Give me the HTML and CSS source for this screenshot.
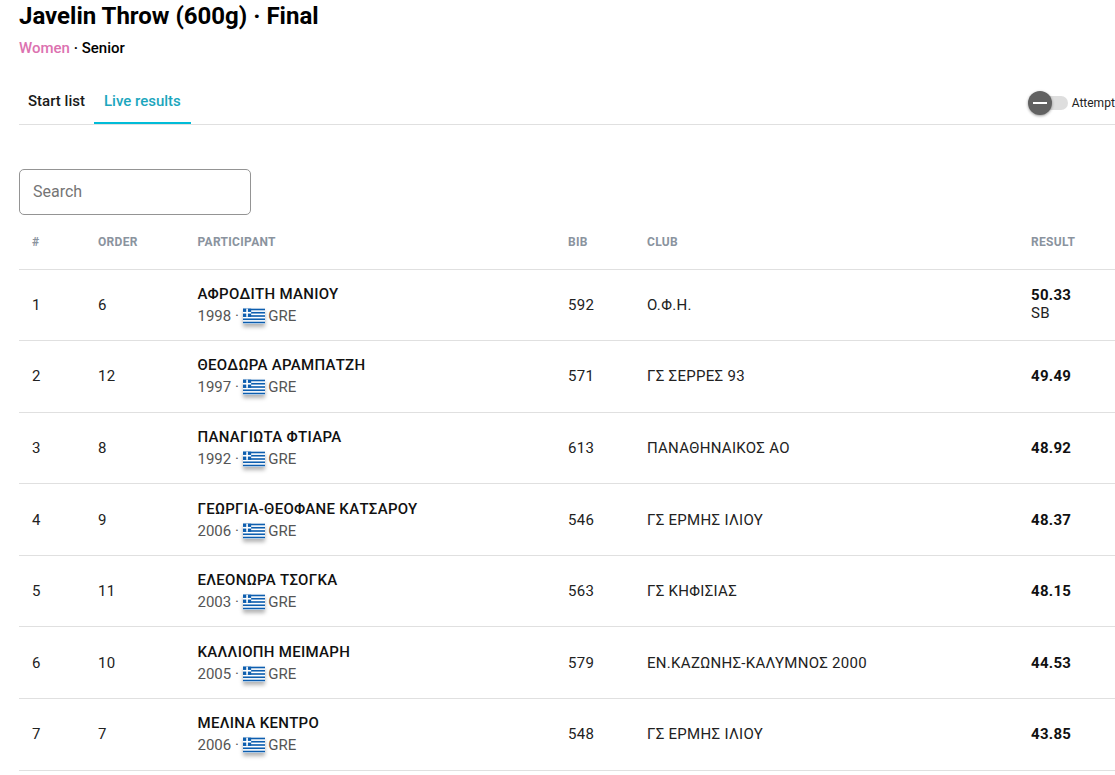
FILE: index.html
```html
<!DOCTYPE html>
<html lang="el">
<head>
<meta charset="utf-8">
<title>Javelin Throw (600g) · Final</title>
<link rel="stylesheet" href="styles.css">
</head>
<body>
<svg class="defs" width="0" height="0" aria-hidden="true">
  <symbol id="gre" viewBox="0 0 27 18">
    <rect width="27" height="18" fill="#0d5eaf"/>
    <g fill="#fff">
      <rect x="0" y="2" width="27" height="2"/>
      <rect x="0" y="6" width="27" height="2"/>
      <rect x="0" y="10" width="27" height="2"/>
      <rect x="0" y="14" width="27" height="2"/>
    </g>
    <rect width="10" height="10" fill="#0d5eaf"/>
    <rect x="4" width="2" height="10" fill="#fff"/>
    <rect y="4" width="10" height="2" fill="#fff"/>
  </symbol>
</svg>
<main class="page">
  <h1 class="title">Javelin Throw (600g) · Final</h1>
  <p class="subtitle"><span class="gender">Women</span> · <span class="category">Senior</span></p>
  <nav class="tabs">
    <a class="tab">Start list</a>
    <a class="tab tab-active">Live results</a>
    <div class="toggle">
      <span class="track"><span class="thumb"><span class="minus"></span></span></span>
      <span class="toggle-label">Attempts</span>
    </div>
  </nav>
  <div class="search"><span class="placeholder">Search</span></div>
  <table class="results">
    <colgroup>
      <col class="c-rank"><col class="c-order"><col class="c-name"><col class="c-bib"><col class="c-club"><col class="c-result">
    </colgroup>
    <thead>
      <tr><th>#</th><th>ORDER</th><th>PARTICIPANT</th><th>BIB</th><th>CLUB</th><th>RESULT</th></tr>
    </thead>
    <tbody>
      <tr><td>1</td><td>6</td><td><div class="name">ΑΦΡΟΔΙΤΗ ΜΑΝΙΟΥ</div><div class="meta">1998 · <svg class="flag"><use href="#gre"/></svg> GRE</div></td><td>592</td><td>Ο.Φ.Η.</td><td><div class="mark">50.33</div><div class="note">SB</div></td></tr>
      <tr><td>2</td><td>12</td><td><div class="name">ΘΕΟΔΩΡΑ ΑΡΑΜΠΑΤΖΗ</div><div class="meta">1997 · <svg class="flag"><use href="#gre"/></svg> GRE</div></td><td>571</td><td>ΓΣ ΣΕΡΡΕΣ 93</td><td><div class="mark">49.49</div></td></tr>
      <tr><td>3</td><td>8</td><td><div class="name">ΠΑΝΑΓΙΩΤΑ ΦΤΙΑΡΑ</div><div class="meta">1992 · <svg class="flag"><use href="#gre"/></svg> GRE</div></td><td>613</td><td>ΠΑΝΑΘΗΝΑΙΚΟΣ ΑΟ</td><td><div class="mark">48.92</div></td></tr>
      <tr><td>4</td><td>9</td><td><div class="name">ΓΕΩΡΓΙΑ-ΘΕΟΦΑΝΕ ΚΑΤΣΑΡΟΥ</div><div class="meta">2006 · <svg class="flag"><use href="#gre"/></svg> GRE</div></td><td>546</td><td>ΓΣ ΕΡΜΗΣ ΙΛΙΟΥ</td><td><div class="mark">48.37</div></td></tr>
      <tr><td>5</td><td>11</td><td><div class="name">ΕΛΕΟΝΩΡΑ ΤΣΟΓΚΑ</div><div class="meta">2003 · <svg class="flag"><use href="#gre"/></svg> GRE</div></td><td>563</td><td>ΓΣ ΚΗΦΙΣΙΑΣ</td><td><div class="mark">48.15</div></td></tr>
      <tr><td>6</td><td>10</td><td><div class="name">ΚΑΛΛΙΟΠΗ ΜΕΙΜΑΡΗ</div><div class="meta">2005 · <svg class="flag"><use href="#gre"/></svg> GRE</div></td><td>579</td><td>ΕΝ.ΚΑΖΩΝΗΣ-ΚΑΛΥΜΝΟΣ 2000</td><td><div class="mark">44.53</div></td></tr>
      <tr><td>7</td><td>7</td><td><div class="name">ΜΕΛΙΝΑ ΚΕΝΤΡΟ</div><div class="meta">2006 · <svg class="flag"><use href="#gre"/></svg> GRE</div></td><td>548</td><td>ΓΣ ΕΡΜΗΣ ΙΛΙΟΥ</td><td><div class="mark">43.85</div></td></tr>
    </tbody>
  </table>
</main>
</body>
</html>
```
FILE: styles.css
```css
* { box-sizing: border-box; }
html, body { margin: 0; height: 775px; overflow: hidden; background: #fff; }
body { font-family: Roboto, "Noto Sans", sans-serif; color: #000; font-size: 15px; }
.defs { position: absolute; }
.page { width: 1140px; padding-left: 19px; }
.title { margin: 0; font-size: 24px; line-height: 32px; font-weight: 700; }
.subtitle { margin: 7px 0 0; font-size: 15px; line-height: 18px; font-weight: 500; }
.gender { color: #dc72b0; }
.tabs { display: flex; align-items: stretch; height: 52px; margin-top: 16px; border-bottom: 1px solid #e0e0e0; width: 1121px; }
.tab { display: flex; align-items: center; padding: 6px 9px 0; font-size: 15px; font-weight: 500; color: #1a1a1a; border-bottom: 2px solid transparent; }
.tab-active { color: #1ba6bd; border-bottom-color: #00bcd8; width: 97px; justify-content: center; }
.toggle { display: flex; align-items: center; margin-left: auto; gap: 4px; margin-right: 19px; padding-top: 9px; }
.track { position: relative; display: block; width: 34px; height: 14px; border-radius: 7px; background: #dedede; }
.thumb { position: absolute; left: -6px; top: -5px; width: 24px; height: 24px; border-radius: 50%; background: #616161; box-shadow: 0 1px 3px rgba(0,0,0,.4); display: flex; align-items: center; justify-content: center; }
.minus { display: block; width: 14px; height: 2px; background: #fff; }
.toggle-label { font-size: 12px; color: #222; white-space: nowrap; }
.search { width: 232px; height: 46px; margin-top: 44px; border: 1px solid #949494; border-radius: 5px; display: flex; align-items: center; padding: 0 0 2px 13px; }
.placeholder { font-size: 16px; color: #757575; }
.results { table-layout: fixed; border-collapse: collapse; width: 1121px; }
.c-rank { width: 66px; } .c-order { width: 99.5px; } .c-name { width: 370.5px; } .c-bib { width: 79px; } .c-club { width: 384px; } .c-result { width: 122px; }
th { height: 54px; padding: 0 13px; text-align: left; font-size: 12px; font-weight: 700; letter-spacing: .3px; color: #8a939e; border-bottom: 1px solid #e0e0e0; }
td { height: 71.6px; padding: 0 13px; font-size: 15px; color: #222; border-bottom: 1px solid #e0e0e0; letter-spacing: .3px; }
.name { font-weight: 500; color: #111; line-height: 20px; }
.meta { color: #555; line-height: 20px; margin-top: 2px; letter-spacing: 0; }
.flag { width: 22px; height: 16px; vertical-align: -3px; box-shadow: 0 3px 4px rgba(0,0,0,.3); }
.mark { font-weight: 700; color: #111; line-height: 18px; }
.note { line-height: 19px; }
```
